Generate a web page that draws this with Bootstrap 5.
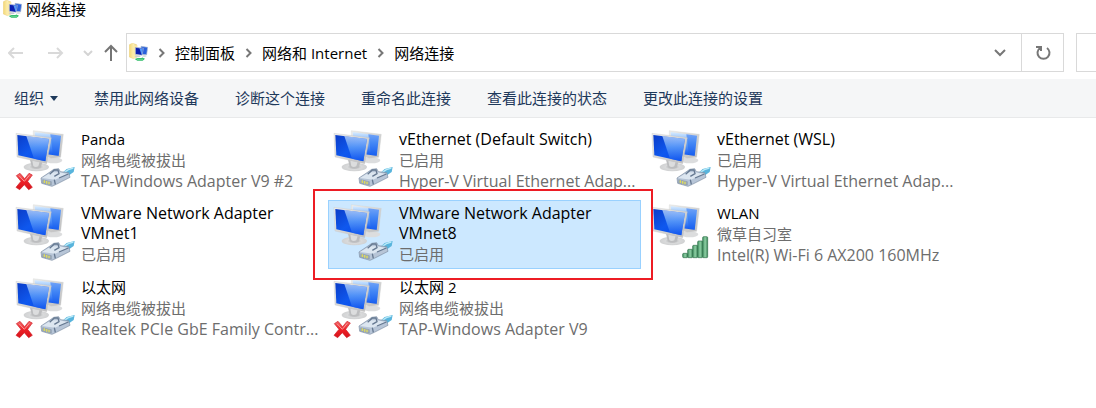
<!DOCTYPE html>
<html lang="zh-CN">
<head>
<meta charset="utf-8">
<meta name="viewport" content="width=device-width, initial-scale=1">
<title>网络连接</title>
<link href="https://cdn.jsdelivr.net/npm/bootstrap@5.3.0/dist/css/bootstrap.min.css" rel="stylesheet">
<style>
body{font-family:"Open Sans","Noto Sans CJK SC",sans-serif;font-size:15px;line-height:20px;color:#000;background:#fff;overflow-x:hidden}
svg{display:block;flex:none}
.title-bar{height:20px;line-height:18px;padding-left:3px;gap:4px}
.nav-row{padding:13px 0 7px 8px}
.nav-btn,.box-btn,.tool-btn{border:0;background:none;padding:0;display:flex;align-items:center;justify-content:center}
.nav-btn{width:16px;height:16px}
.up-btn{width:14px;margin:0 8px}
.address{height:39px;border:1px solid #d9d9d9;min-width:0}
.address a{color:#000;text-decoration:none;white-space:nowrap}
.crumbs{gap:9px;padding-left:2px}
.box-btn{width:42px;height:37px}
.refresh{border-left:1px solid #d9d9d9}
.search{width:20px;height:39px;border:1px solid #d9d9d9;border-right:0;border-radius:0;padding:0;outline:0;margin-left:12px}
.tool-bar{height:39px;background:#f5f6f7;border-bottom:1px solid #e8e9ea;padding-left:14px;gap:36px}
.tool-btn{color:#1e395b;white-space:nowrap;gap:6px}
.tiles{display:grid;grid-template-columns:repeat(auto-fill,313px);grid-auto-rows:69px;gap:5px;padding:8px 10px}
.tile{position:relative;display:flex;gap:6px;padding:2px 4px;border:1px solid transparent;background:none;text-align:left;color:#6d6d6d;line-height:21px}
.tile strong{font-weight:400;color:#000;line-height:20px;display:block;margin-bottom:1px}
.tile-text{min-width:0;flex:1}
.tile-text span{display:block}
.tile .latin{font-size:16px;white-space:nowrap}
.tile strong.latin{white-space:normal}
.tile.selected{background:#cce8ff;border-color:#99d1ff}
.callout-frame{position:absolute;inset:-12px -13px -12px -16px;border:2px solid #ed1c24;z-index:2;pointer-events:none}
</style>
</head>
<body>
<svg width="0" height="0" class="position-absolute" aria-hidden="true">
<defs>
<linearGradient id="screen" x1="0" y1="0" x2="1" y2="1"><stop offset="0" stop-color="#0a3cc8"/><stop offset=".5" stop-color="#0f58ee"/><stop offset="1" stop-color="#0748ea"/></linearGradient>
<linearGradient id="shine" x1="0" y1="0" x2="0" y2="1"><stop offset="0" stop-color="#d9ecff"/><stop offset=".45" stop-color="#6dabfb"/><stop offset="1" stop-color="#0f56f0"/></linearGradient>
<linearGradient id="metal" x1="0" y1="0" x2="1" y2="1"><stop offset="0" stop-color="#eeeeec"/><stop offset="1" stop-color="#bcbcbd"/></linearGradient>
<radialGradient id="base"><stop offset="0" stop-color="#a4a6a8"/><stop offset=".55" stop-color="#d9dadb"/><stop offset="1" stop-color="#d0d1d2"/></radialGradient>
<linearGradient id="bars" x1="0" y1="0" x2="1" y2="0"><stop offset="0" stop-color="#3f8f60"/><stop offset=".5" stop-color="#8ecfa4"/><stop offset="1" stop-color="#3b8659"/></linearGradient>
<linearGradient id="red" x1="0" y1="0" x2="0" y2="1"><stop offset="0" stop-color="#f2686a"/><stop offset=".5" stop-color="#ee2027"/><stop offset="1" stop-color="#d6131b"/></linearGradient>
<linearGradient id="folder" x1="0" y1="0" x2="1" y2="0"><stop offset="0" stop-color="#f3d774"/><stop offset=".6" stop-color="#fdf0b8"/><stop offset="1" stop-color="#e0b94c"/></linearGradient>
<symbol id="pcs" viewBox="42 24 180 186">
<ellipse cx="158" cy="118" rx="26" ry="9" fill="#dcddde"/>
<path d="M97 29L187 40L179 109L150 112L96 95Z" fill="url(#metal)" stroke="#cfd0d1"/>
<path d="M101 33L180 44L173 104L105 96Z" fill="url(#shine)"/>
<path d="M148 40L180 44L173 104L156 102Z" fill="#1e66f0" opacity=".5"/>
<ellipse cx="106" cy="138" rx="38" ry="13" fill="url(#base)"/>
<path d="M86 112L125 118L120 139Q105 147 92 137Z" fill="#bcbdbf"/>
<path d="M94 119L116 122L112 136Q103 141 97 135Z" fill="#dcddde"/>
<path d="M45 37L151 50L137 128L48 108Z" fill="url(#metal)" stroke="#c2c3c5"/>
<path d="M49 42L144 54L133 121L52 103Z" fill="url(#screen)"/>
<path d="M76 45L144 54L133 121L99 113Z" fill="url(#shine)" opacity=".7"/>
</symbol>
<symbol id="plug" viewBox="42 24 180 186">
<path d="M183 157L197 144L221 138L218 153L202 164L195 163Z" fill="#58b4dc"/>
<path d="M190 154L202 146L217 141" fill="none" stroke="#b9e9f8" stroke-width="4"/>
<path d="M120 171L150 151L158 145L173 143L178 152L203 155L207 169L166 190L153 196L122 187Z" fill="#b7c5d7" stroke="#7b8ca2" stroke-width="2"/>
<path d="M123 171L151 154L174 154L200 159L162 176Z" fill="#dce6f0"/>
<path d="M146 160L160 147L171 147L174 158L160 166M160 176L163 190M174 171L202 159" fill="none" stroke="#667991" stroke-width="4"/>
<path d="M125 176L151 182V192L125 186Z" fill="#9eabb8" stroke="#6b7c91"/>
<path d="M130 178V186M137 180V188M144 182V190" stroke="#dedb5c" stroke-width="4"/>
</symbol>
<symbol id="cross" viewBox="42 24 180 186"><path d="M46 164L57 157L71 173L84 157L94 162L80 181L94 199L83 206L70 191L56 206L45 199L60 181Z" fill="url(#red)" stroke="#d02028" stroke-width="2" stroke-linejoin="round"/><path d="M54 164L70 181L85 163" fill="none" stroke="#f99a98" stroke-width="3"/></symbol>
<symbol id="signal" viewBox="42 24 180 186"><g fill="url(#bars)" stroke="#2e7049" stroke-width="2"><rect x="137" y="175" width="15" height="13" rx="3"/><rect x="152" y="163" width="15" height="25" rx="3"/><rect x="167" y="151" width="15" height="37" rx="3"/><rect x="182" y="138" width="15" height="50" rx="3"/><rect x="197" y="125" width="15" height="63" rx="3"/></g></symbol>
<symbol id="folder-net" viewBox="0 0 57 57">
<path d="M1 5L11 0L24 6V42L13 47L1 42Z" fill="url(#folder)" stroke="#e3c268"/>
<path d="M13 8L24 6V42L13 47Z" fill="#fbeaa6"/>
<path d="M36 10L56 13L53 35L36 34Z" fill="#2860dc" stroke="#aebbd0" stroke-width="2"/>
<path d="M19 13L43 16L39 37L19 34Z" fill="#0c1fb0" stroke="#c3cbd9" stroke-width="2"/>
<path d="M31 15L42 17L38 36Z" fill="#5798f4"/>
<ellipse cx="26" cy="40" rx="9" ry="3" fill="#c6cbd3"/><ellipse cx="46" cy="39" rx="7" ry="2" fill="#cbd0d6"/>
<path d="M17 48L26 45H40L37 42L48 47L41 53H25Z" fill="#31bd69"/><path d="M24 49H42" stroke="#88e0a9" stroke-width="2"/>
</symbol>
<symbol id="chev-r" viewBox="0 0 8 10"><path d="M2 1L6 5L2 9" fill="none" stroke="#777" stroke-width="2"/></symbol>
</defs>
</svg>

<header class="title-bar d-flex">
<svg width="19" height="19"><use href="#folder-net"/></svg>
<span>网络连接</span>
</header>

<nav class="nav-row d-flex align-items-center" aria-label="导航">
<button class="nav-btn" aria-label="后退"><svg width="16" height="14" viewBox="0 0 16 14"><path d="M15 7H1M6 2L1 7L6 12" fill="none" stroke="#d9d9d9" stroke-width="2"/></svg></button>
<button class="nav-btn ms-4" aria-label="前进"><svg width="16" height="14" viewBox="0 0 16 14"><path d="M0 7H14M9 2L14 7L9 12" fill="none" stroke="#d9d9d9" stroke-width="2"/></svg></button>
<button class="nav-btn ms-3" aria-label="最近"><svg width="10" height="6" viewBox="0 0 10 6"><path d="M1 1L5 5L9 1" fill="none" stroke="#d4d4d4" stroke-width="2"/></svg></button>
<button class="nav-btn up-btn" aria-label="向上"><svg width="14" height="17" viewBox="0 0 14 17"><path d="M7 17V3M1 8L7 2L13 8" fill="none" stroke="#757575" stroke-width="2"/></svg></button>
<div class="address d-flex align-items-center flex-grow-1">
<div class="crumbs d-flex align-items-center flex-grow-1">
<svg width="19" height="19"><use href="#folder-net"/></svg>
<svg width="9" height="10"><use href="#chev-r"/></svg>
<a href="#">控制面板</a>
<svg width="9" height="10"><use href="#chev-r"/></svg>
<a href="#">网络和 Internet</a>
<svg width="9" height="10"><use href="#chev-r"/></svg>
<a href="#">网络连接</a>
</div>
<button class="box-btn" aria-label="历史地址"><svg width="12" height="8" viewBox="0 0 12 8"><path d="M1 1L6 6L11 1" fill="none" stroke="#777" stroke-width="2"/></svg></button>
<button class="box-btn refresh" aria-label="刷新"><svg width="16" height="16" viewBox="0 0 16 16"><path d="M12 3A6 6 0 1 1 5 3M1 2H6V6" fill="none" stroke="#777" stroke-width="2"/></svg></button>
</div>
<input class="search" type="text" aria-label="搜索">
</nav>

<div class="tool-bar d-flex align-items-center" role="toolbar">
<button class="tool-btn">组织<svg width="8" height="5" viewBox="0 0 8 5"><path d="M0 0H8L4 5Z" fill="#1e395b"/></svg></button>
<button class="tool-btn">禁用此网络设备</button>
<button class="tool-btn">诊断这个连接</button>
<button class="tool-btn">重命名此连接</button>
<button class="tool-btn">查看此连接的状态</button>
<button class="tool-btn">更改此连接的设置</button>
</div>

<main class="tiles">
<button class="tile"><svg width="60" height="62"><use href="#pcs"/><use href="#plug"/><use href="#cross"/></svg><span class="tile-text"><strong>Panda</strong><span>网络电缆被拔出</span><span class="latin">TAP-Windows Adapter V9 #2</span></span></button>
<button class="tile"><svg width="60" height="62"><use href="#pcs"/><use href="#plug"/></svg><span class="tile-text"><strong class="latin">vEthernet (Default Switch)</strong><span>已启用</span><span class="latin">Hyper-V Virtual Ethernet Adap...</span></span></button>
<button class="tile"><svg width="60" height="62"><use href="#pcs"/><use href="#plug"/></svg><span class="tile-text"><strong class="latin">vEthernet (WSL)</strong><span>已启用</span><span class="latin">Hyper-V Virtual Ethernet Adap...</span></span></button>
<button class="tile"><svg width="60" height="62"><use href="#pcs"/><use href="#plug"/></svg><span class="tile-text"><strong class="latin">VMware Network Adapter VMnet1</strong><span>已启用</span></span></button>
<button class="tile selected"><svg width="60" height="62"><use href="#pcs"/><use href="#plug"/></svg><span class="tile-text"><strong class="latin">VMware Network Adapter VMnet8</strong><span>已启用</span></span><span class="callout-frame"></span></button>
<button class="tile"><svg width="60" height="62"><use href="#pcs"/><use href="#signal"/></svg><span class="tile-text"><strong>WLAN</strong><span>微草自习室</span><span class="latin">Intel(R) Wi-Fi 6 AX200 160MHz</span></span></button>
<button class="tile"><svg width="60" height="62"><use href="#pcs"/><use href="#plug"/><use href="#cross"/></svg><span class="tile-text"><strong>以太网</strong><span>网络电缆被拔出</span><span class="latin">Realtek PCIe GbE Family Contr...</span></span></button>
<button class="tile"><svg width="60" height="62"><use href="#pcs"/><use href="#plug"/><use href="#cross"/></svg><span class="tile-text"><strong>以太网 2</strong><span>网络电缆被拔出</span><span class="latin">TAP-Windows Adapter V9</span></span></button>
</main>
<script src="https://cdn.jsdelivr.net/npm/bootstrap@5.3.0/dist/js/bootstrap.bundle.min.js"></script>
</body>
</html>
